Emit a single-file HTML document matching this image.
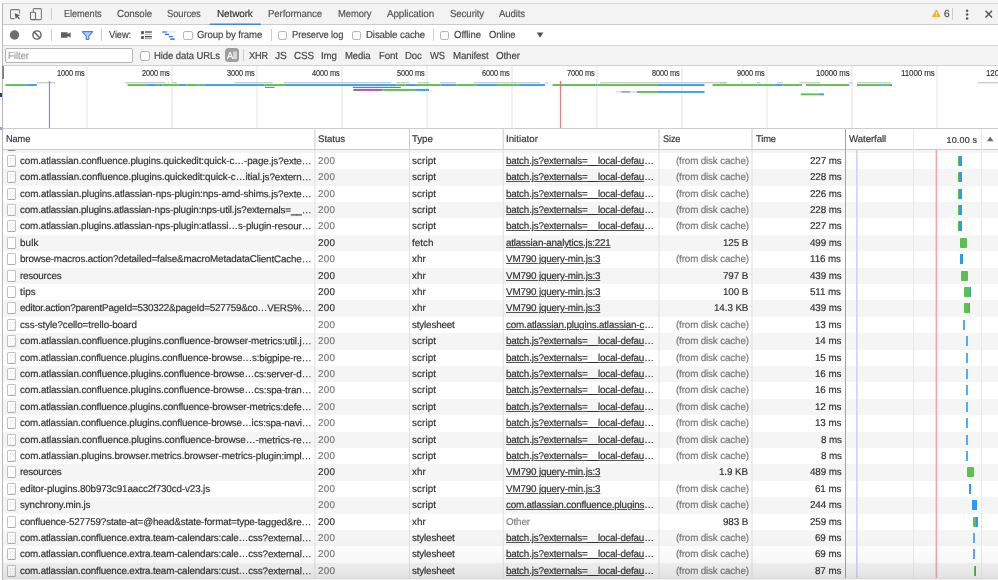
<!DOCTYPE html><html><head><meta charset="utf-8"><title>DevTools Network</title><style>html,body{margin:0;padding:0;}
body{width:998px;height:580px;overflow:hidden;background:#fff;position:relative;font-family:"Liberation Sans",sans-serif;font-size:10.6px;color:#303030;-webkit-font-smoothing:antialiased;}
div,span,i,b,u{box-sizing:border-box;}
#app{position:absolute;left:0;top:0;width:998px;height:580px;overflow:hidden;will-change:transform;-webkit-text-stroke:0.17px;}
.abs{position:absolute;}
#leftstrip{position:absolute;left:0;top:3px;width:2px;height:577px;background:#fcfcfc;}
#leftborder{position:absolute;left:2px;top:3px;width:1px;height:577px;background:#b9b9b9;}
#topstrip{position:absolute;left:0;top:0;width:998px;height:3px;background:#f6f6f6;}
#topline{position:absolute;left:2px;top:3px;width:996px;height:1px;background:#d6d6d6;}
#tabbar{position:absolute;left:3px;top:4px;width:995px;height:21px;background:#f3f3f3;border-bottom:1px solid #ccc;}
#toolbar{position:absolute;left:3px;top:25px;width:995px;height:21px;background:#fff;border-bottom:1px solid #d4d4d4;}
#filterbar{position:absolute;left:3px;top:46px;width:995px;height:20px;background:#f3f3f3;border-bottom:1px solid #d2d2d2;}
#overview{position:absolute;left:3px;top:66px;width:995px;height:63px;background:#fff;border-bottom:1px solid #ccc;}
#thead{position:absolute;left:3px;top:129px;width:995px;height:21px;background:#fff;border-bottom:1px solid #ccc;}
.tx{position:absolute;white-space:nowrap;line-height:12px;transform-origin:0 0;}
.tab{color:#5a5a5a;font-size:10.6px;}
.tab.sel{color:#333;}
.sep{position:absolute;width:1px;background:#ccc;}
.cb{position:absolute;width:9.5px;height:9.5px;border:1px solid #b4b4b4;border-radius:2.2px;background:#fff;}
.gl{position:absolute;top:0;width:2px;background:#f1f1f1;}
.ob{position:absolute;height:2px;}
#rows{position:absolute;left:0;top:150px;width:998px;height:427.5px;overflow:hidden;}
.r{position:absolute;left:3px;width:995px;height:16.4px;background:#fff;color:#303030;}
.r.odd{background:#f5f5f5;}
.r.c .s,.r.c .z{color:#777;}
.r span{position:absolute;top:0;line-height:16.2px;white-space:nowrap;font-size:9.85px;transform-origin:0 0;transform:rotate(0.03deg);}
.r span span{position:static;transform:none;}
.r .i u{text-decoration:underline;text-decoration-thickness:0.8px;text-underline-offset:1.2px;text-decoration-color:#555;}
.r .i .oth{position:static;color:#808080;}
.ic{position:absolute;left:4px;top:2px;width:9.2px;height:12px;border:1px solid #c2c2c2;border-bottom-color:#adadad;border-radius:1.5px;background:#fff;}
.ic.doc{background:#fdfdfd;}
.ic.doc:after{content:"";position:absolute;left:2px;top:2px;width:3.2px;height:6px;border:1px dotted #e6e6e6;}
.wb{position:absolute;top:3.2px;height:10px;background:#2d9bf3;}
.wg{position:absolute;top:3.2px;height:10px;background:#5ac24a;border-radius:1px;}
.vline{position:absolute;width:1px;}
</style></head><body><div id="app">
<div id="topstrip"></div>
<div id="tabbar"></div>
<div id="topline"></div>
<div id="toolbar"></div>
<div id="filterbar"></div>
<div id="overview"></div>
<div id="thead"></div>
<!-- tab bar icons -->
<svg class="abs" style="left:8px;top:6px" width="40" height="16" viewBox="8 6 40 16">
  <path d="M19.5 13.5V10.6a1 1 0 0 0-1-1h-7a1 1 0 0 0-1 1v7a1 1 0 0 0 1 1h3" fill="none" stroke="#7c7c7c" stroke-width="1.05"/>
  <path d="M14.6 13.2l5.6 2.1-2.3.9 2 2.4-.9.8-2-2.4-1.2 2z" fill="#5a5a5a"/>
  <rect x="33.2" y="8.6" width="8.2" height="11" rx="1" fill="none" stroke="#7c7c7c" stroke-width="1.05"/>
  <rect x="30.5" y="12.3" width="5" height="7.3" rx="0.8" fill="#f3f3f3" stroke="#6e6e6e" stroke-width="1.1"/>
</svg>
<i class="sep" style="left:51px;top:8px;height:12px"></i>
<svg class="abs" style="left:208px;top:22px" width="55" height="4" viewBox="208 22 55 4"><rect x="209.8" y="23.5" width="51" height="1.5" fill="#3f82f5"/></svg>
<!-- right side of tabbar -->
<svg class="abs" style="left:930px;top:6px" width="68" height="16" viewBox="930 6 68 16">
  <path d="M936.3 9.9l3.8 6.7h-7.6z" fill="#f2b01e" stroke="#f2b01e" stroke-width="0.9" stroke-linejoin="round"/>
  <rect x="935.9" y="11.9" width="0.8" height="2.8" fill="#fff"/><rect x="935.9" y="15.3" width="0.8" height="0.8" fill="#fff"/>
  <circle cx="967.1" cy="10.8" r="1.25" fill="#5a5a5a"/><circle cx="967.1" cy="14.6" r="1.25" fill="#5a5a5a"/><circle cx="967.1" cy="18.4" r="1.25" fill="#5a5a5a"/>
  <path d="M985.5 10.8l6.5 6.7M992 10.8l-6.5 6.7" stroke="#555" stroke-width="1.45" fill="none"/>
</svg>
<i class="sep" style="left:952px;top:8px;height:12px"></i>
<!-- toolbar icons -->
<svg class="abs" style="left:8px;top:28px" width="170" height="14" viewBox="8 28 170 14">
  <circle cx="14.5" cy="35" r="4.7" fill="#6e6e6e"/>
  <circle cx="37" cy="35" r="4.1" fill="none" stroke="#5f5f5f" stroke-width="1.4"/>
  <path d="M34.1 32.1l5.8 5.8" stroke="#5f5f5f" stroke-width="1.4"/>
  <path d="M61 32.2h6.6v1.9l3-1.9v5.6l-3-1.9v1.9H61z" fill="#5f5f5f"/>
  <path d="M82.3 31.6h10.4l-3.9 4.6v3.3h-2.6v-3.3z" fill="#b5cdfb" stroke="#4480f0" stroke-width="1.1" stroke-linejoin="round"/>
  <rect x="141.1" y="31.1" width="2.8" height="3.1" fill="#5a5a5a"/><rect x="145" y="31.2" width="6.9" height="1.6" fill="#6a6a6a"/><rect x="145" y="33.7" width="6.9" height="1.1" fill="#b4b4b4"/>
  <rect x="141.1" y="36.1" width="2.8" height="2.9" fill="#5a5a5a"/><rect x="145" y="36" width="6.9" height="1.3" fill="#4a4a4a"/><rect x="145" y="37.9" width="6.9" height="1.3" fill="#a8a8a8"/>
  <rect x="162" y="31.2" width="13.7" height="1.6" fill="#dfe8fb"/>
  <rect x="162" y="31.2" width="4.9" height="1.6" rx="0.5" fill="#5c93f3"/>
  <rect x="164.7" y="33.8" width="4.4" height="1.3" rx="0.5" fill="#2a66e0"/>
  <rect x="168.6" y="36" width="4.4" height="1.3" rx="0.5" fill="#3b78e7"/>
  <rect x="170.2" y="38.3" width="4.6" height="1.6" rx="0.5" fill="#4a86f0"/>
</svg>
<i class="sep" style="left:51px;top:29px;height:12px"></i>
<i class="sep" style="left:101px;top:29px;height:12px"></i>
<i class="sep" style="left:270.5px;top:29px;height:12px"></i>
<i class="sep" style="left:432.5px;top:29px;height:12px"></i>
<i class="cb" style="left:183px;top:30.5px"></i>
<i class="cb" style="left:277.5px;top:30.5px"></i>
<i class="cb" style="left:351.8px;top:30.5px"></i>
<i class="cb" style="left:439.8px;top:30.5px"></i>
<svg class="abs" style="left:536px;top:31.6px" width="8" height="7" viewBox="0 0 8 7"><path d="M0.8 0.5h6.6l-3.3 5.2z" fill="#555"/></svg>
<!-- filter bar -->
<div class="abs" style="left:5px;top:48px;width:127.5px;height:14.5px;background:#fff;border:1px solid #b5b5b5;border-radius:2px"></div>
<i class="cb" style="left:140px;top:51px"></i>
<div class="abs" style="left:224.7px;top:48.4px;width:14.6px;height:14px;background:#9e9e9e;border-radius:3.5px"></div>
<i class="sep" style="left:243px;top:49px;height:12px"></i>
<i class="gl" style="left:86.0px;top:66px;height:62px"></i>
<i class="gl" style="left:171.0px;top:66px;height:62px"></i>
<i class="gl" style="left:256.0px;top:66px;height:62px"></i>
<i class="gl" style="left:341.0px;top:66px;height:62px"></i>
<i class="gl" style="left:426.0px;top:66px;height:62px"></i>
<i class="gl" style="left:511.0px;top:66px;height:62px"></i>
<i class="gl" style="left:596.0px;top:66px;height:62px"></i>
<i class="gl" style="left:681.0px;top:66px;height:62px"></i>
<i class="gl" style="left:766.0px;top:66px;height:62px"></i>
<i class="gl" style="left:851.0px;top:66px;height:62px"></i>
<i class="gl" style="left:936.0px;top:66px;height:62px"></i>
<svg class="abs" style="left:0;top:66px" width="998" height="62" viewBox="0 66 998 62">
<rect x="36.8" y="82.3" width="18.2" height="1" fill="#b8b8b8"/>
<rect x="125.0" y="82.3" width="40.5" height="1" fill="#b8b8b8"/>
<rect x="168.0" y="82.3" width="1.0" height="1" fill="#b8b8b8"/>
<rect x="172.0" y="82.3" width="4.8" height="1" fill="#b8b8b8"/>
<rect x="234.3" y="82.3" width="38.2" height="1" fill="#b8b8b8"/>
<rect x="283.8" y="82.3" width="107.5" height="1" fill="#b8b8b8"/>
<rect x="396.3" y="82.3" width="13.0" height="1" fill="#b8b8b8"/>
<rect x="417.5" y="82.3" width="11.8" height="1" fill="#b8b8b8"/>
<rect x="440.0" y="82.3" width="16.3" height="1" fill="#b8b8b8"/>
<rect x="473.8" y="82.3" width="66.2" height="1" fill="#b8b8b8"/>
<rect x="545.0" y="82.3" width="3.0" height="1" fill="#b8b8b8"/>
<rect x="559.5" y="82.3" width="2.5" height="1" fill="#b8b8b8"/>
<rect x="600.0" y="82.3" width="126.0" height="1" fill="#b8b8b8"/>
<rect x="720.0" y="82.3" width="7.0" height="1" fill="#b8b8b8"/>
<rect x="741.5" y="82.3" width="1.5" height="1" fill="#b8b8b8"/>
<rect x="757.0" y="82.3" width="3.5" height="1" fill="#b8b8b8"/>
<rect x="777.0" y="82.3" width="6.0" height="1" fill="#b8b8b8"/>
<rect x="799.4" y="82.3" width="20.9" height="1" fill="#b8b8b8"/>
<rect x="848.7" y="82.3" width="3.8" height="1" fill="#b8b8b8"/>
<rect x="857.0" y="82.3" width="34.3" height="1" fill="#b8b8b8"/>
<rect x="977.7" y="82.3" width="20.3" height="1" fill="#b8b8b8"/>
<rect x="5.5" y="84.1" width="20.8" height="1.9" fill="#5cc14a"/>
<rect x="26.3" y="84.1" width="10.5" height="1.9" fill="#35a0f4"/>
<rect x="127.5" y="84.1" width="18.8" height="1.9" fill="#5cc14a"/>
<rect x="146.3" y="84.1" width="10.5" height="1.9" fill="#35a0f4"/>
<rect x="156.8" y="84.1" width="3.2" height="1.9" fill="#5cc14a"/>
<rect x="160.0" y="84.1" width="2.5" height="1.9" fill="#35a0f4"/>
<rect x="162.5" y="84.1" width="16.3" height="1.9" fill="#5cc14a"/>
<rect x="178.8" y="84.1" width="7.5" height="1.9" fill="#35a0f4"/>
<rect x="186.3" y="84.1" width="10.5" height="1.9" fill="#5cc14a"/>
<rect x="196.8" y="84.1" width="1.7" height="1.9" fill="#35a0f4"/>
<rect x="198.5" y="84.1" width="5.8" height="1.9" fill="#5cc14a"/>
<rect x="204.3" y="84.1" width="60.2" height="1.9" fill="#35a0f4"/>
<rect x="264.5" y="84.1" width="20.5" height="1.9" fill="#5cc14a"/>
<rect x="285.0" y="84.1" width="111.6" height="1.9" fill="#35a0f4"/>
<rect x="396.6" y="84.1" width="9.0" height="1.9" fill="#5cc14a"/>
<rect x="405.6" y="84.1" width="10.3" height="1.9" fill="#35a0f4"/>
<rect x="415.9" y="84.1" width="24.6" height="1.9" fill="#5cc14a"/>
<rect x="440.5" y="84.1" width="15.8" height="1.9" fill="#35a0f4"/>
<rect x="456.3" y="84.1" width="20.0" height="1.9" fill="#5cc14a"/>
<rect x="476.3" y="84.1" width="20.7" height="1.9" fill="#35a0f4"/>
<rect x="497.0" y="84.1" width="16.8" height="1.9" fill="#5cc14a"/>
<rect x="513.8" y="84.1" width="1.2" height="1.9" fill="#35a0f4"/>
<rect x="515.0" y="84.1" width="5.0" height="1.9" fill="#5cc14a"/>
<rect x="520.0" y="84.1" width="25.0" height="1.9" fill="#35a0f4"/>
<rect x="552.5" y="84.1" width="43.0" height="1.9" fill="#5cc14a"/>
<rect x="595.5" y="84.1" width="2.0" height="1.9" fill="#35a0f4"/>
<rect x="597.5" y="84.1" width="60.5" height="1.9" fill="#5cc14a"/>
<rect x="658.0" y="84.1" width="46.5" height="1.9" fill="#35a0f4"/>
<rect x="712.5" y="84.1" width="43.2" height="1.9" fill="#5cc14a"/>
<rect x="755.7" y="84.1" width="1.8" height="1.9" fill="#35a0f4"/>
<rect x="757.5" y="84.1" width="16.8" height="1.9" fill="#5cc14a"/>
<rect x="774.3" y="84.1" width="8.4" height="1.9" fill="#35a0f4"/>
<rect x="782.7" y="84.1" width="18.1" height="1.9" fill="#5cc14a"/>
<rect x="800.8" y="84.1" width="1.2" height="1.9" fill="#35a0f4"/>
<rect x="806.0" y="84.1" width="42.1" height="1.9" fill="#5cc14a"/>
<rect x="848.1" y="84.1" width="1.2" height="1.9" fill="#35a0f4"/>
<rect x="857.0" y="84.1" width="23.0" height="1.9" fill="#5cc14a"/>
<rect x="880.0" y="84.1" width="1.5" height="1.9" fill="#35a0f4"/>
<rect x="881.5" y="84.1" width="8.5" height="1.9" fill="#5cc14a"/>
<rect x="890.0" y="84.1" width="2.0" height="1.9" fill="#35a0f4"/>
<rect x="265.0" y="86.8" width="9.5" height="1.2" fill="#35a0f4"/>
<rect x="352.8" y="86.8" width="48.0" height="1.2" fill="#2b8ff0"/>
<rect x="353.5" y="88.9" width="1.5" height="2" fill="#2e7d6b"/>
<rect x="355.0" y="88.9" width="27.1" height="2" fill="#b04fc0"/>
<rect x="382.1" y="88.9" width="33.1" height="2" fill="#5cc14a"/>
<rect x="415.2" y="88.9" width="13.8" height="2" fill="#35a0f4"/>
<rect x="616.0" y="91.4" width="21.0" height="1" fill="#c8c8c8"/>
<rect x="621.5" y="91.2" width="8.5" height="1.4" fill="#9a9a9a"/>
<rect x="637.0" y="91.0" width="21.0" height="1.9" fill="#5cc14a"/>
<rect x="658.0" y="91.0" width="46.5" height="1.9" fill="#35a0f4"/>
<rect x="800.8" y="93.4" width="18.1" height="1.9" fill="#5cc14a"/>
<rect x="818.9" y="93.4" width="5.1" height="1.9" fill="#35a0f4"/>
<rect x="48.9" y="81" width="1" height="47" fill="#7474ff"/>
<rect x="559.9" y="81" width="1" height="47" fill="#ee6a6a"/>
</svg>
<!-- table header separators -->
<svg class="abs" style="left:0;top:129px" width="998" height="20" viewBox="0 0 998 20"><rect x="314.4" y="0" width="1" height="20" fill="#cdcdcd"/><rect x="409.0" y="0" width="1" height="20" fill="#cdcdcd"/><rect x="502.7" y="0" width="1" height="20" fill="#cdcdcd"/><rect x="658.5" y="0" width="1" height="20" fill="#cdcdcd"/><rect x="751.5" y="0" width="1" height="20" fill="#cdcdcd"/></svg>
<svg class="abs" style="left:986px;top:135px" width="9" height="8" viewBox="0 0 9 8"><path d="M1 6.3l3.2-4.8 3.2 4.8z" fill="#6a6a6a"/></svg>
<span class="tx" style="left:64.04px;top:8.00px;color:#555;font-size:10.2px;letter-spacing:-0.122px;transform:scaleX(0.9065) rotate(0.03deg);">Elements</span>
<span class="tx" style="left:116.94px;top:8.00px;color:#555;font-size:10.2px;letter-spacing:-0.122px;transform:scaleX(0.9581) rotate(0.03deg);">Console</span>
<span class="tx" style="left:167.24px;top:8.00px;color:#555;font-size:10.2px;letter-spacing:-0.122px;transform:scaleX(0.9231) rotate(0.03deg);">Sources</span>
<span class="tx" style="left:217.24px;top:8.00px;color:#333;font-size:10.2px;letter-spacing:-0.122px;transform:scaleX(0.9777) rotate(0.03deg);">Network</span>
<span class="tx" style="left:267.54px;top:8.00px;color:#555;font-size:10.2px;letter-spacing:-0.122px;transform:scaleX(0.9478) rotate(0.03deg);">Performance</span>
<span class="tx" style="left:338.04px;top:8.00px;color:#555;font-size:10.2px;letter-spacing:-0.122px;transform:scaleX(0.9264) rotate(0.03deg);">Memory</span>
<span class="tx" style="left:386.84px;top:8.00px;color:#555;font-size:10.2px;letter-spacing:-0.122px;transform:scaleX(0.9713) rotate(0.03deg);">Application</span>
<span class="tx" style="left:450.24px;top:8.00px;color:#555;font-size:10.2px;letter-spacing:-0.122px;transform:scaleX(0.9518) rotate(0.03deg);">Security</span>
<span class="tx" style="left:498.74px;top:8.00px;color:#555;font-size:10.2px;letter-spacing:-0.122px;transform:scaleX(0.9425) rotate(0.03deg);">Audits</span>
<span class="tx" style="left:943.64px;top:7.80px;color:#444;font-size:10.2px;letter-spacing:0.000px;transform:scaleX(1.0000) rotate(0.03deg);">6</span>
<span class="tx" style="left:108.94px;top:29.00px;color:#444;font-size:10.2px;letter-spacing:-0.122px;transform:scaleX(0.9124) rotate(0.03deg);">View:</span>
<span class="tx" style="left:197.24px;top:29.00px;color:#444;font-size:10.2px;letter-spacing:-0.122px;transform:scaleX(0.9441) rotate(0.03deg);">Group by frame</span>
<span class="tx" style="left:291.64px;top:29.00px;color:#444;font-size:10.2px;letter-spacing:-0.122px;transform:scaleX(0.9206) rotate(0.03deg);">Preserve log</span>
<span class="tx" style="left:366.04px;top:29.00px;color:#444;font-size:10.2px;letter-spacing:-0.122px;transform:scaleX(0.9471) rotate(0.03deg);">Disable cache</span>
<span class="tx" style="left:453.64px;top:29.00px;color:#444;font-size:10.2px;letter-spacing:-0.122px;transform:scaleX(0.9471) rotate(0.03deg);">Offline</span>
<span class="tx" style="left:489.24px;top:29.00px;color:#444;font-size:10.2px;letter-spacing:-0.122px;transform:scaleX(0.9196) rotate(0.03deg);">Online</span>
<span class="tx" style="left:8.44px;top:49.60px;color:#a0a0a0;font-size:10.2px;letter-spacing:-0.122px;transform:scaleX(0.9588) rotate(0.03deg);">Filter</span>
<span class="tx" style="left:154.24px;top:49.60px;color:#444;font-size:10.2px;letter-spacing:-0.122px;transform:scaleX(0.9387) rotate(0.03deg);">Hide data URLs</span>
<span class="tx" style="left:226.94px;top:49.60px;color:#fff;font-size:10.2px;letter-spacing:-0.122px;transform:scaleX(0.9133) rotate(0.03deg);">All</span>
<span class="tx" style="left:248.64px;top:49.60px;color:#444;font-size:10.2px;letter-spacing:-0.122px;transform:scaleX(0.8990) rotate(0.03deg);">XHR</span>
<span class="tx" style="left:275.04px;top:49.60px;color:#444;font-size:10.2px;letter-spacing:0.031px;transform:scaleX(1.0000) rotate(0.03deg);">JS</span>
<span class="tx" style="left:294.04px;top:49.60px;color:#444;font-size:10.2px;letter-spacing:-0.122px;transform:scaleX(0.9669) rotate(0.03deg);">CSS</span>
<span class="tx" style="left:320.74px;top:49.60px;color:#444;font-size:10.2px;letter-spacing:-0.122px;transform:scaleX(0.9571) rotate(0.03deg);">Img</span>
<span class="tx" style="left:345.24px;top:49.60px;color:#444;font-size:10.2px;letter-spacing:-0.122px;transform:scaleX(0.9399) rotate(0.03deg);">Media</span>
<span class="tx" style="left:378.94px;top:49.60px;color:#444;font-size:10.2px;letter-spacing:-0.122px;transform:scaleX(0.9500) rotate(0.03deg);">Font</span>
<span class="tx" style="left:404.94px;top:49.60px;color:#444;font-size:10.2px;letter-spacing:-0.122px;transform:scaleX(0.9408) rotate(0.03deg);">Doc</span>
<span class="tx" style="left:430.04px;top:49.60px;color:#444;font-size:10.2px;letter-spacing:-0.122px;transform:scaleX(0.9278) rotate(0.03deg);">WS</span>
<span class="tx" style="left:453.24px;top:49.60px;color:#444;font-size:10.2px;letter-spacing:-0.122px;transform:scaleX(0.9486) rotate(0.03deg);">Manifest</span>
<span class="tx" style="left:495.94px;top:49.60px;color:#444;font-size:10.2px;letter-spacing:-0.122px;transform:scaleX(0.9611) rotate(0.03deg);">Other</span>
<span class="tx" style="left:6.17px;top:133.10px;color:#333;font-size:9.7px;letter-spacing:-0.116px;transform:scaleX(0.9519) rotate(0.03deg);">Name</span>
<span class="tx" style="left:317.67px;top:133.10px;color:#333;font-size:9.7px;letter-spacing:-0.060px;transform:scaleX(1.0000) rotate(0.03deg);">Status</span>
<span class="tx" style="left:412.07px;top:133.10px;color:#333;font-size:9.7px;letter-spacing:-0.050px;transform:scaleX(1.0000) rotate(0.03deg);">Type</span>
<span class="tx" style="left:506.07px;top:133.10px;color:#333;font-size:9.7px;letter-spacing:0.011px;transform:scaleX(1.0000) rotate(0.03deg);">Initiator</span>
<span class="tx" style="left:662.97px;top:133.10px;color:#333;font-size:9.7px;letter-spacing:-0.116px;transform:scaleX(0.9436) rotate(0.03deg);">Size</span>
<span class="tx" style="left:755.97px;top:133.10px;color:#333;font-size:9.7px;letter-spacing:-0.116px;transform:scaleX(0.9637) rotate(0.03deg);">Time</span>
<span class="tx" style="left:848.67px;top:133.10px;color:#333;font-size:9.7px;letter-spacing:-0.076px;transform:scaleX(1.0000) rotate(0.03deg);">Waterfall</span>
<span class="tx" style="left:946.50px;top:133.80px;color:#333;font-size:9.0px;letter-spacing:0.160px;font-family:"DejaVu Sans",sans-serif;">10.00 s</span>
<span class="tx" style="left:57.10px;top:67.40px;color:#333;font-size:9.0px;letter-spacing:-0.108px;transform:scaleX(0.8172);">1000 ms</span>
<span class="tx" style="left:142.10px;top:67.40px;color:#333;font-size:9.0px;letter-spacing:-0.108px;transform:scaleX(0.8172);">2000 ms</span>
<span class="tx" style="left:227.10px;top:67.40px;color:#333;font-size:9.0px;letter-spacing:-0.108px;transform:scaleX(0.8172);">3000 ms</span>
<span class="tx" style="left:312.11px;top:67.40px;color:#333;font-size:9.0px;letter-spacing:-0.108px;transform:scaleX(0.8172);">4000 ms</span>
<span class="tx" style="left:397.11px;top:67.40px;color:#333;font-size:9.0px;letter-spacing:-0.108px;transform:scaleX(0.8172);">5000 ms</span>
<span class="tx" style="left:482.11px;top:67.40px;color:#333;font-size:9.0px;letter-spacing:-0.108px;transform:scaleX(0.8172);">6000 ms</span>
<span class="tx" style="left:567.11px;top:67.40px;color:#333;font-size:9.0px;letter-spacing:-0.108px;transform:scaleX(0.8172);">7000 ms</span>
<span class="tx" style="left:652.11px;top:67.40px;color:#333;font-size:9.0px;letter-spacing:-0.108px;transform:scaleX(0.8172);">8000 ms</span>
<span class="tx" style="left:737.11px;top:67.40px;color:#333;font-size:9.0px;letter-spacing:-0.108px;transform:scaleX(0.8172);">9000 ms</span>
<span class="tx" style="left:816.11px;top:67.40px;color:#333;font-size:9.0px;letter-spacing:-0.108px;transform:scaleX(0.8689);">10000 ms</span>
<span class="tx" style="left:901.11px;top:67.40px;color:#333;font-size:9.0px;letter-spacing:-0.108px;transform:scaleX(0.8842);">11000 ms</span>
<span class="tx" style="left:986.40px;top:67.40px;color:#333;font-size:9.0px;letter-spacing:-0.108px;transform:scaleX(0.8895);">12000 ms</span>

<div id="rows">
<div class="r odd" style="top:-13.5px"><i class="ic doc" style="top:2.6px;border-bottom-color:#8f8f8f"></i></div>
<div class="r c" style="top:3px;height:16px"><i class="ic doc"></i><span class="n" style="left:16.95px;letter-spacing:-0.113px">com.atlassian.confluence.plugins.quickedit:quick-c…-page.js?exte…</span><span class="s" style="left:314.55px;letter-spacing:0.231px">200</span><span class="t" style="left:409.45px;letter-spacing:0.114px">script</span><span class="i" style="left:503.15px;letter-spacing:-0.189px"><u>batch.js?externals=__local-defau</u>…</span><span class="z" style="left:673.15px;letter-spacing:-0.156px">(from disk cache)</span><span class="m" style="left:806.77px;letter-spacing:-0.100px">227 ms</span><b class="wg" style="left:955.0px;width:1px"></b><b class="wb" style="left:955.8px;width:3.2px"></b></div>
<div class="r odd c" style="top:19px;height:17px"><i class="ic doc"></i><span class="n" style="left:16.95px;letter-spacing:-0.085px">com.atlassian.confluence.plugins.quickedit:quick-c…itial.js?extern…</span><span class="s" style="left:314.55px;letter-spacing:0.231px">200</span><span class="t" style="left:409.45px;letter-spacing:0.114px">script</span><span class="i" style="left:503.15px;letter-spacing:-0.189px"><u>batch.js?externals=__local-defau</u>…</span><span class="z" style="left:673.15px;letter-spacing:-0.156px">(from disk cache)</span><span class="m" style="left:806.77px;letter-spacing:-0.100px">228 ms</span><b class="wg" style="left:955.0px;width:1px"></b><b class="wb" style="left:955.8px;width:3.2px"></b></div>
<div class="r c" style="top:36px;height:16px"><i class="ic doc"></i><span class="n" style="left:16.95px;letter-spacing:-0.104px">com.atlassian.plugins.atlassian-nps-plugin:nps-amd-shims.js?exte…</span><span class="s" style="left:314.55px;letter-spacing:0.231px">200</span><span class="t" style="left:409.45px;letter-spacing:0.114px">script</span><span class="i" style="left:503.15px;letter-spacing:-0.189px"><u>batch.js?externals=__local-defau</u>…</span><span class="z" style="left:673.15px;letter-spacing:-0.156px">(from disk cache)</span><span class="m" style="left:806.77px;letter-spacing:-0.100px">226 ms</span><b class="wg" style="left:955.0px;width:1px"></b><b class="wb" style="left:955.8px;width:3.2px"></b></div>
<div class="r odd c" style="top:52px;height:16px"><i class="ic doc"></i><span class="n" style="left:16.95px;letter-spacing:-0.137px">com.atlassian.plugins.atlassian-nps-plugin:nps-util.js?externals=__…</span><span class="s" style="left:314.55px;letter-spacing:0.231px">200</span><span class="t" style="left:409.45px;letter-spacing:0.114px">script</span><span class="i" style="left:503.15px;letter-spacing:-0.189px"><u>batch.js?externals=__local-defau</u>…</span><span class="z" style="left:673.15px;letter-spacing:-0.156px">(from disk cache)</span><span class="m" style="left:806.77px;letter-spacing:-0.100px">228 ms</span><b class="wg" style="left:955.0px;width:1px"></b><b class="wb" style="left:955.8px;width:3.2px"></b></div>
<div class="r c" style="top:68px;height:17px"><i class="ic doc"></i><span class="n" style="left:16.95px;letter-spacing:-0.134px">com.atlassian.plugins.atlassian-nps-plugin:atlassi…s-plugin-resour…</span><span class="s" style="left:314.55px;letter-spacing:0.231px">200</span><span class="t" style="left:409.45px;letter-spacing:0.114px">script</span><span class="i" style="left:503.15px;letter-spacing:-0.189px"><u>batch.js?externals=__local-defau</u>…</span><span class="z" style="left:673.15px;letter-spacing:-0.156px">(from disk cache)</span><span class="m" style="left:806.77px;letter-spacing:-0.100px">227 ms</span><b class="wg" style="left:955.0px;width:1px"></b><b class="wb" style="left:955.8px;width:3.2px"></b></div>
<div class="r odd" style="top:85px;height:16px"><i class="ic blank"></i><span class="n" style="left:16.95px;letter-spacing:0.146px">bulk</span><span class="s" style="left:314.55px;letter-spacing:0.231px">200</span><span class="t" style="left:409.45px;letter-spacing:0.014px">fetch</span><span class="i" style="left:503.15px;letter-spacing:-0.186px"><u>atlassian-analytics.js:221</u></span><span class="z" style="left:720.12px;letter-spacing:-0.100px">125 B</span><span class="m" style="left:806.77px;letter-spacing:-0.100px">499 ms</span><b class="wg" style="left:956.5px;width:7.0px"></b></div>
<div class="r c" style="top:101px;height:17px"><i class="ic blank"></i><span class="n" style="left:16.95px;letter-spacing:-0.162px">browse-macros.action?detailed=false&amp;macroMetadataClientCache…</span><span class="s" style="left:314.55px;letter-spacing:0.231px">200</span><span class="t" style="left:409.45px;letter-spacing:0.056px">xhr</span><span class="i" style="left:503.15px;letter-spacing:-0.172px"><u>VM790 jquery-min.js:3</u></span><span class="z" style="left:673.15px;letter-spacing:-0.156px">(from disk cache)</span><span class="m" style="left:807.49px;letter-spacing:-0.100px">116 ms</span><b class="wb" style="left:957.0px;width:2.5px"></b></div>
<div class="r odd" style="top:118px;height:16px"><i class="ic blank"></i><span class="n" style="left:16.95px;letter-spacing:-0.204px">resources</span><span class="s" style="left:314.55px;letter-spacing:0.231px">200</span><span class="t" style="left:409.45px;letter-spacing:0.056px">xhr</span><span class="i" style="left:503.15px;letter-spacing:-0.172px"><u>VM790 jquery-min.js:3</u></span><span class="z" style="left:720.12px;letter-spacing:-0.100px">797 B</span><span class="m" style="left:806.77px;letter-spacing:-0.100px">439 ms</span><b class="wg" style="left:957.5px;width:7.0px"></b></div>
<div class="r" style="top:134px;height:16px"><i class="ic blank"></i><span class="n" style="left:16.95px;letter-spacing:0.157px">tips</span><span class="s" style="left:314.55px;letter-spacing:0.231px">200</span><span class="t" style="left:409.45px;letter-spacing:0.056px">xhr</span><span class="i" style="left:503.15px;letter-spacing:-0.172px"><u>VM790 jquery-min.js:3</u></span><span class="z" style="left:720.12px;letter-spacing:-0.100px">100 B</span><span class="m" style="left:807.49px;letter-spacing:-0.100px">511 ms</span><b class="wg" style="left:960.5px;width:6.5px"></b><b class="wb" style="left:966.9px;width:1.6px"></b></div>
<div class="r odd" style="top:150px;height:17px"><i class="ic blank"></i><span class="n" style="left:16.95px;letter-spacing:-0.219px">editor.action?parentPageId=530322&amp;pageId=527759&amp;co…VERS%…</span><span class="s" style="left:314.55px;letter-spacing:0.231px">200</span><span class="t" style="left:409.45px;letter-spacing:0.056px">xhr</span><span class="i" style="left:503.15px;letter-spacing:-0.172px"><u>VM790 jquery-min.js:3</u></span><span class="z" style="left:711.02px;letter-spacing:-0.100px">14.3 KB</span><span class="m" style="left:806.77px;letter-spacing:-0.100px">439 ms</span><b class="wg" style="left:960.5px;width:5.5px"></b><b class="wb" style="left:965.9px;width:1.6px"></b></div>
<div class="r c" style="top:167px;height:16px"><i class="ic doc"></i><span class="n" style="left:16.95px;letter-spacing:-0.094px">css-style?cello=trello-board</span><span class="s" style="left:314.55px;letter-spacing:0.231px">200</span><span class="t" style="left:409.45px;letter-spacing:-0.170px">stylesheet</span><span class="i" style="left:503.15px;letter-spacing:-0.174px"><u>com.atlassian.plugins.atlassian-c</u>…</span><span class="z" style="left:673.15px;letter-spacing:-0.156px">(from disk cache)</span><span class="m" style="left:812.14px;letter-spacing:-0.100px">13 ms</span><b class="wb" style="left:960.0px;width:2px;background:#53acf6"></b></div>
<div class="r odd c" style="top:183px;height:17px"><i class="ic doc"></i><span class="n" style="left:16.95px;letter-spacing:-0.101px">com.atlassian.confluence.plugins.confluence-browser-metrics:util.j…</span><span class="s" style="left:314.55px;letter-spacing:0.231px">200</span><span class="t" style="left:409.45px;letter-spacing:0.114px">script</span><span class="i" style="left:503.15px;letter-spacing:-0.189px"><u>batch.js?externals=__local-defau</u>…</span><span class="z" style="left:673.15px;letter-spacing:-0.156px">(from disk cache)</span><span class="m" style="left:812.14px;letter-spacing:-0.100px">14 ms</span><b class="wb" style="left:963.0px;width:2px;background:#53acf6"></b></div>
<div class="r c" style="top:200px;height:16px"><i class="ic doc"></i><span class="n" style="left:16.95px;letter-spacing:-0.150px">com.atlassian.confluence.plugins.confluence-browse…s:bigpipe-re…</span><span class="s" style="left:314.55px;letter-spacing:0.231px">200</span><span class="t" style="left:409.45px;letter-spacing:0.114px">script</span><span class="i" style="left:503.15px;letter-spacing:-0.189px"><u>batch.js?externals=__local-defau</u>…</span><span class="z" style="left:673.15px;letter-spacing:-0.156px">(from disk cache)</span><span class="m" style="left:812.14px;letter-spacing:-0.100px">15 ms</span><b class="wb" style="left:963.0px;width:2px;background:#53acf6"></b></div>
<div class="r odd c" style="top:216px;height:16px"><i class="ic doc"></i><span class="n" style="left:16.95px;letter-spacing:-0.108px">com.atlassian.confluence.plugins.confluence-browse…cs:server-d…</span><span class="s" style="left:314.55px;letter-spacing:0.231px">200</span><span class="t" style="left:409.45px;letter-spacing:0.114px">script</span><span class="i" style="left:503.15px;letter-spacing:-0.189px"><u>batch.js?externals=__local-defau</u>…</span><span class="z" style="left:673.15px;letter-spacing:-0.156px">(from disk cache)</span><span class="m" style="left:812.14px;letter-spacing:-0.100px">16 ms</span><b class="wb" style="left:963.0px;width:2px;background:#53acf6"></b></div>
<div class="r c" style="top:232px;height:17px"><i class="ic doc"></i><span class="n" style="left:16.95px;letter-spacing:-0.108px">com.atlassian.confluence.plugins.confluence-browse…cs:spa-tran…</span><span class="s" style="left:314.55px;letter-spacing:0.231px">200</span><span class="t" style="left:409.45px;letter-spacing:0.114px">script</span><span class="i" style="left:503.15px;letter-spacing:-0.189px"><u>batch.js?externals=__local-defau</u>…</span><span class="z" style="left:673.15px;letter-spacing:-0.156px">(from disk cache)</span><span class="m" style="left:812.14px;letter-spacing:-0.100px">16 ms</span><b class="wb" style="left:963.0px;width:2px;background:#53acf6"></b></div>
<div class="r odd c" style="top:249px;height:16px"><i class="ic doc"></i><span class="n" style="left:16.95px;letter-spacing:-0.130px">com.atlassian.confluence.plugins.confluence-browser-metrics:defe…</span><span class="s" style="left:314.55px;letter-spacing:0.231px">200</span><span class="t" style="left:409.45px;letter-spacing:0.114px">script</span><span class="i" style="left:503.15px;letter-spacing:-0.189px"><u>batch.js?externals=__local-defau</u>…</span><span class="z" style="left:673.15px;letter-spacing:-0.156px">(from disk cache)</span><span class="m" style="left:812.14px;letter-spacing:-0.100px">12 ms</span><b class="wb" style="left:963.0px;width:2px;background:#53acf6"></b></div>
<div class="r c" style="top:265px;height:17px"><i class="ic doc"></i><span class="n" style="left:16.95px;letter-spacing:-0.158px">com.atlassian.confluence.plugins.confluence-browse…ics:spa-navi…</span><span class="s" style="left:314.55px;letter-spacing:0.231px">200</span><span class="t" style="left:409.45px;letter-spacing:0.114px">script</span><span class="i" style="left:503.15px;letter-spacing:-0.189px"><u>batch.js?externals=__local-defau</u>…</span><span class="z" style="left:673.15px;letter-spacing:-0.156px">(from disk cache)</span><span class="m" style="left:812.14px;letter-spacing:-0.100px">13 ms</span><b class="wb" style="left:963.0px;width:2px;background:#53acf6"></b></div>
<div class="r odd c" style="top:282px;height:16px"><i class="ic doc"></i><span class="n" style="left:16.95px;letter-spacing:-0.081px">com.atlassian.confluence.plugins.confluence-browse…-metrics-re…</span><span class="s" style="left:314.55px;letter-spacing:0.231px">200</span><span class="t" style="left:409.45px;letter-spacing:0.114px">script</span><span class="i" style="left:503.15px;letter-spacing:-0.189px"><u>batch.js?externals=__local-defau</u>…</span><span class="z" style="left:673.15px;letter-spacing:-0.156px">(from disk cache)</span><span class="m" style="left:817.51px;letter-spacing:-0.100px">8 ms</span><b class="wb" style="left:963.0px;width:2px;background:#53acf6"></b></div>
<div class="r c" style="top:298px;height:16px"><i class="ic doc"></i><span class="n" style="left:16.95px;letter-spacing:-0.111px">com.atlassian.plugins.browser.metrics.browser-metrics-plugin:impl…</span><span class="s" style="left:314.55px;letter-spacing:0.231px">200</span><span class="t" style="left:409.45px;letter-spacing:0.114px">script</span><span class="i" style="left:503.15px;letter-spacing:-0.189px"><u>batch.js?externals=__local-defau</u>…</span><span class="z" style="left:673.15px;letter-spacing:-0.156px">(from disk cache)</span><span class="m" style="left:817.51px;letter-spacing:-0.100px">8 ms</span><b class="wb" style="left:963.0px;width:2px;background:#53acf6"></b></div>
<div class="r odd" style="top:314px;height:17px"><i class="ic blank"></i><span class="n" style="left:16.95px;letter-spacing:-0.204px">resources</span><span class="s" style="left:314.55px;letter-spacing:0.231px">200</span><span class="t" style="left:409.45px;letter-spacing:0.056px">xhr</span><span class="i" style="left:503.15px;letter-spacing:-0.172px"><u>VM790 jquery-min.js:3</u></span><span class="z" style="left:716.39px;letter-spacing:-0.100px">1.9 KB</span><span class="m" style="left:806.77px;letter-spacing:-0.100px">489 ms</span><b class="wg" style="left:963.5px;width:7.0px"></b></div>
<div class="r c" style="top:331px;height:16px"><i class="ic doc"></i><span class="n" style="left:16.95px;letter-spacing:-0.129px">editor-plugins.80b973c91aacc2f730cd-v23.js</span><span class="s" style="left:314.55px;letter-spacing:0.231px">200</span><span class="t" style="left:409.45px;letter-spacing:0.114px">script</span><span class="i" style="left:503.15px;letter-spacing:-0.172px"><u>VM790 jquery-min.js:3</u></span><span class="z" style="left:673.15px;letter-spacing:-0.156px">(from disk cache)</span><span class="m" style="left:812.14px;letter-spacing:-0.100px">61 ms</span><b class="wb" style="left:965.9px;width:2.4px"></b></div>
<div class="r odd c" style="top:347px;height:17px"><i class="ic doc"></i><span class="n" style="left:16.95px;letter-spacing:-0.139px">synchrony.min.js</span><span class="s" style="left:314.55px;letter-spacing:0.231px">200</span><span class="t" style="left:409.45px;letter-spacing:0.114px">script</span><span class="i" style="left:503.15px;letter-spacing:-0.197px"><u>com.atlassian.confluence.plugins</u>…</span><span class="z" style="left:673.15px;letter-spacing:-0.156px">(from disk cache)</span><span class="m" style="left:806.77px;letter-spacing:-0.100px">244 ms</span><b class="wb" style="left:969.0px;width:5.0px"></b></div>
<div class="r" style="top:364px;height:16px"><i class="ic blank"></i><span class="n" style="left:16.95px;letter-spacing:-0.170px">confluence-527759?state-at=@head&amp;state-format=type-tagged&amp;re…</span><span class="s" style="left:314.55px;letter-spacing:0.231px">200</span><span class="t" style="left:409.45px;letter-spacing:0.056px">xhr</span><span class="i" style="left:503.15px;letter-spacing:-0.131px"><span class="oth">Other</span></span><span class="z" style="left:720.12px;letter-spacing:-0.100px">983 B</span><span class="m" style="left:806.77px;letter-spacing:-0.100px">259 ms</span><b class="wg" style="left:969.8px;width:4.1px"></b><b class="wb" style="left:973.3px;width:1.6px"></b></div>
<div class="r odd c" style="top:380px;height:16px"><i class="ic doc"></i><span class="n" style="left:16.95px;letter-spacing:-0.158px">com.atlassian.confluence.extra.team-calendars:cale…css?external…</span><span class="s" style="left:314.55px;letter-spacing:0.231px">200</span><span class="t" style="left:409.45px;letter-spacing:-0.170px">stylesheet</span><span class="i" style="left:503.15px;letter-spacing:-0.189px"><u>batch.js?externals=__local-defau</u>…</span><span class="z" style="left:673.15px;letter-spacing:-0.156px">(from disk cache)</span><span class="m" style="left:812.14px;letter-spacing:-0.100px">69 ms</span><b class="wb" style="left:970.3px;width:2px;background:#53acf6"></b></div>
<div class="r c" style="top:396px;height:17px"><i class="ic doc"></i><span class="n" style="left:16.95px;letter-spacing:-0.158px">com.atlassian.confluence.extra.team-calendars:cale…css?external…</span><span class="s" style="left:314.55px;letter-spacing:0.231px">200</span><span class="t" style="left:409.45px;letter-spacing:-0.170px">stylesheet</span><span class="i" style="left:503.15px;letter-spacing:-0.189px"><u>batch.js?externals=__local-defau</u>…</span><span class="z" style="left:673.15px;letter-spacing:-0.156px">(from disk cache)</span><span class="m" style="left:812.14px;letter-spacing:-0.100px">69 ms</span><b class="wb" style="left:970.3px;width:2px;background:#53acf6"></b></div>
<div class="r odd c" style="top:413px;height:16px"><i class="ic doc"></i><span class="n" style="left:16.95px;letter-spacing:-0.158px">com.atlassian.confluence.extra.team-calendars:cust…css?external…</span><span class="s" style="left:314.55px;letter-spacing:0.231px">200</span><span class="t" style="left:409.45px;letter-spacing:-0.170px">stylesheet</span><span class="i" style="left:503.15px;letter-spacing:-0.189px"><u>batch.js?externals=__local-defau</u>…</span><span class="z" style="left:673.15px;letter-spacing:-0.156px">(from disk cache)</span><span class="m" style="left:812.14px;letter-spacing:-0.100px">87 ms</span><b class="wg" style="left:970.5px;width:1px"></b><b class="wb" style="left:971.5px;width:1px"></b></div>
</div>
<!-- column separators over rows -->
<svg class="abs" style="left:0;top:150px" width="998" height="428" viewBox="0 0 998 428"><rect x="314.4" y="0" width="1" height="428" fill="#e0e0e0"/><rect x="409.0" y="0" width="1" height="428" fill="#e0e0e0"/><rect x="502.7" y="0" width="1" height="428" fill="#e0e0e0"/><rect x="658.5" y="0" width="1" height="428" fill="#e0e0e0"/><rect x="751.5" y="0" width="1" height="428" fill="#e0e0e0"/></svg>
<i class="sep" style="left:845px;top:129px;height:449px;background:#a3a3a3"></i>
<i class="sep" style="left:912.8px;top:129px;height:449px;background:#e9e9e9"></i>
<i class="sep" style="left:981px;top:129px;height:449px;background:#e9e9e9"></i>

<svg class="abs" style="left:850px;top:150px" width="100" height="428" viewBox="850 0 100 428"><rect x="856" y="0" width="1.7" height="428" fill="#d2d2ff"/><rect x="935.6" y="0" width="1.6" height="428" fill="#f4a6a6"/></svg>
<div class="abs" style="left:3px;top:538px;width:995px;height:39.5px;background:linear-gradient(to bottom,rgba(0,0,0,0) 0%,rgba(0,0,0,0.018) 45%,rgba(0,0,0,0.045) 75%,rgba(0,0,0,0.075) 100%)"></div>
<div class="abs" style="left:0;top:577.5px;width:998px;height:2.5px;background:#efefef;border-top:1px solid #d9d9d9"></div>
<div id="leftstrip"></div>
<div id="leftborder"></div>
<div class="abs" style="left:2px;top:66px;width:2px;height:13px;background:#848484"></div>
<div class="abs" style="left:0;top:93px;width:2px;height:4px;background:#1d3f8e"></div>
<div class="abs" style="left:0;top:127px;width:2px;height:3px;background:#98a2dc"></div>

</div></body></html>
